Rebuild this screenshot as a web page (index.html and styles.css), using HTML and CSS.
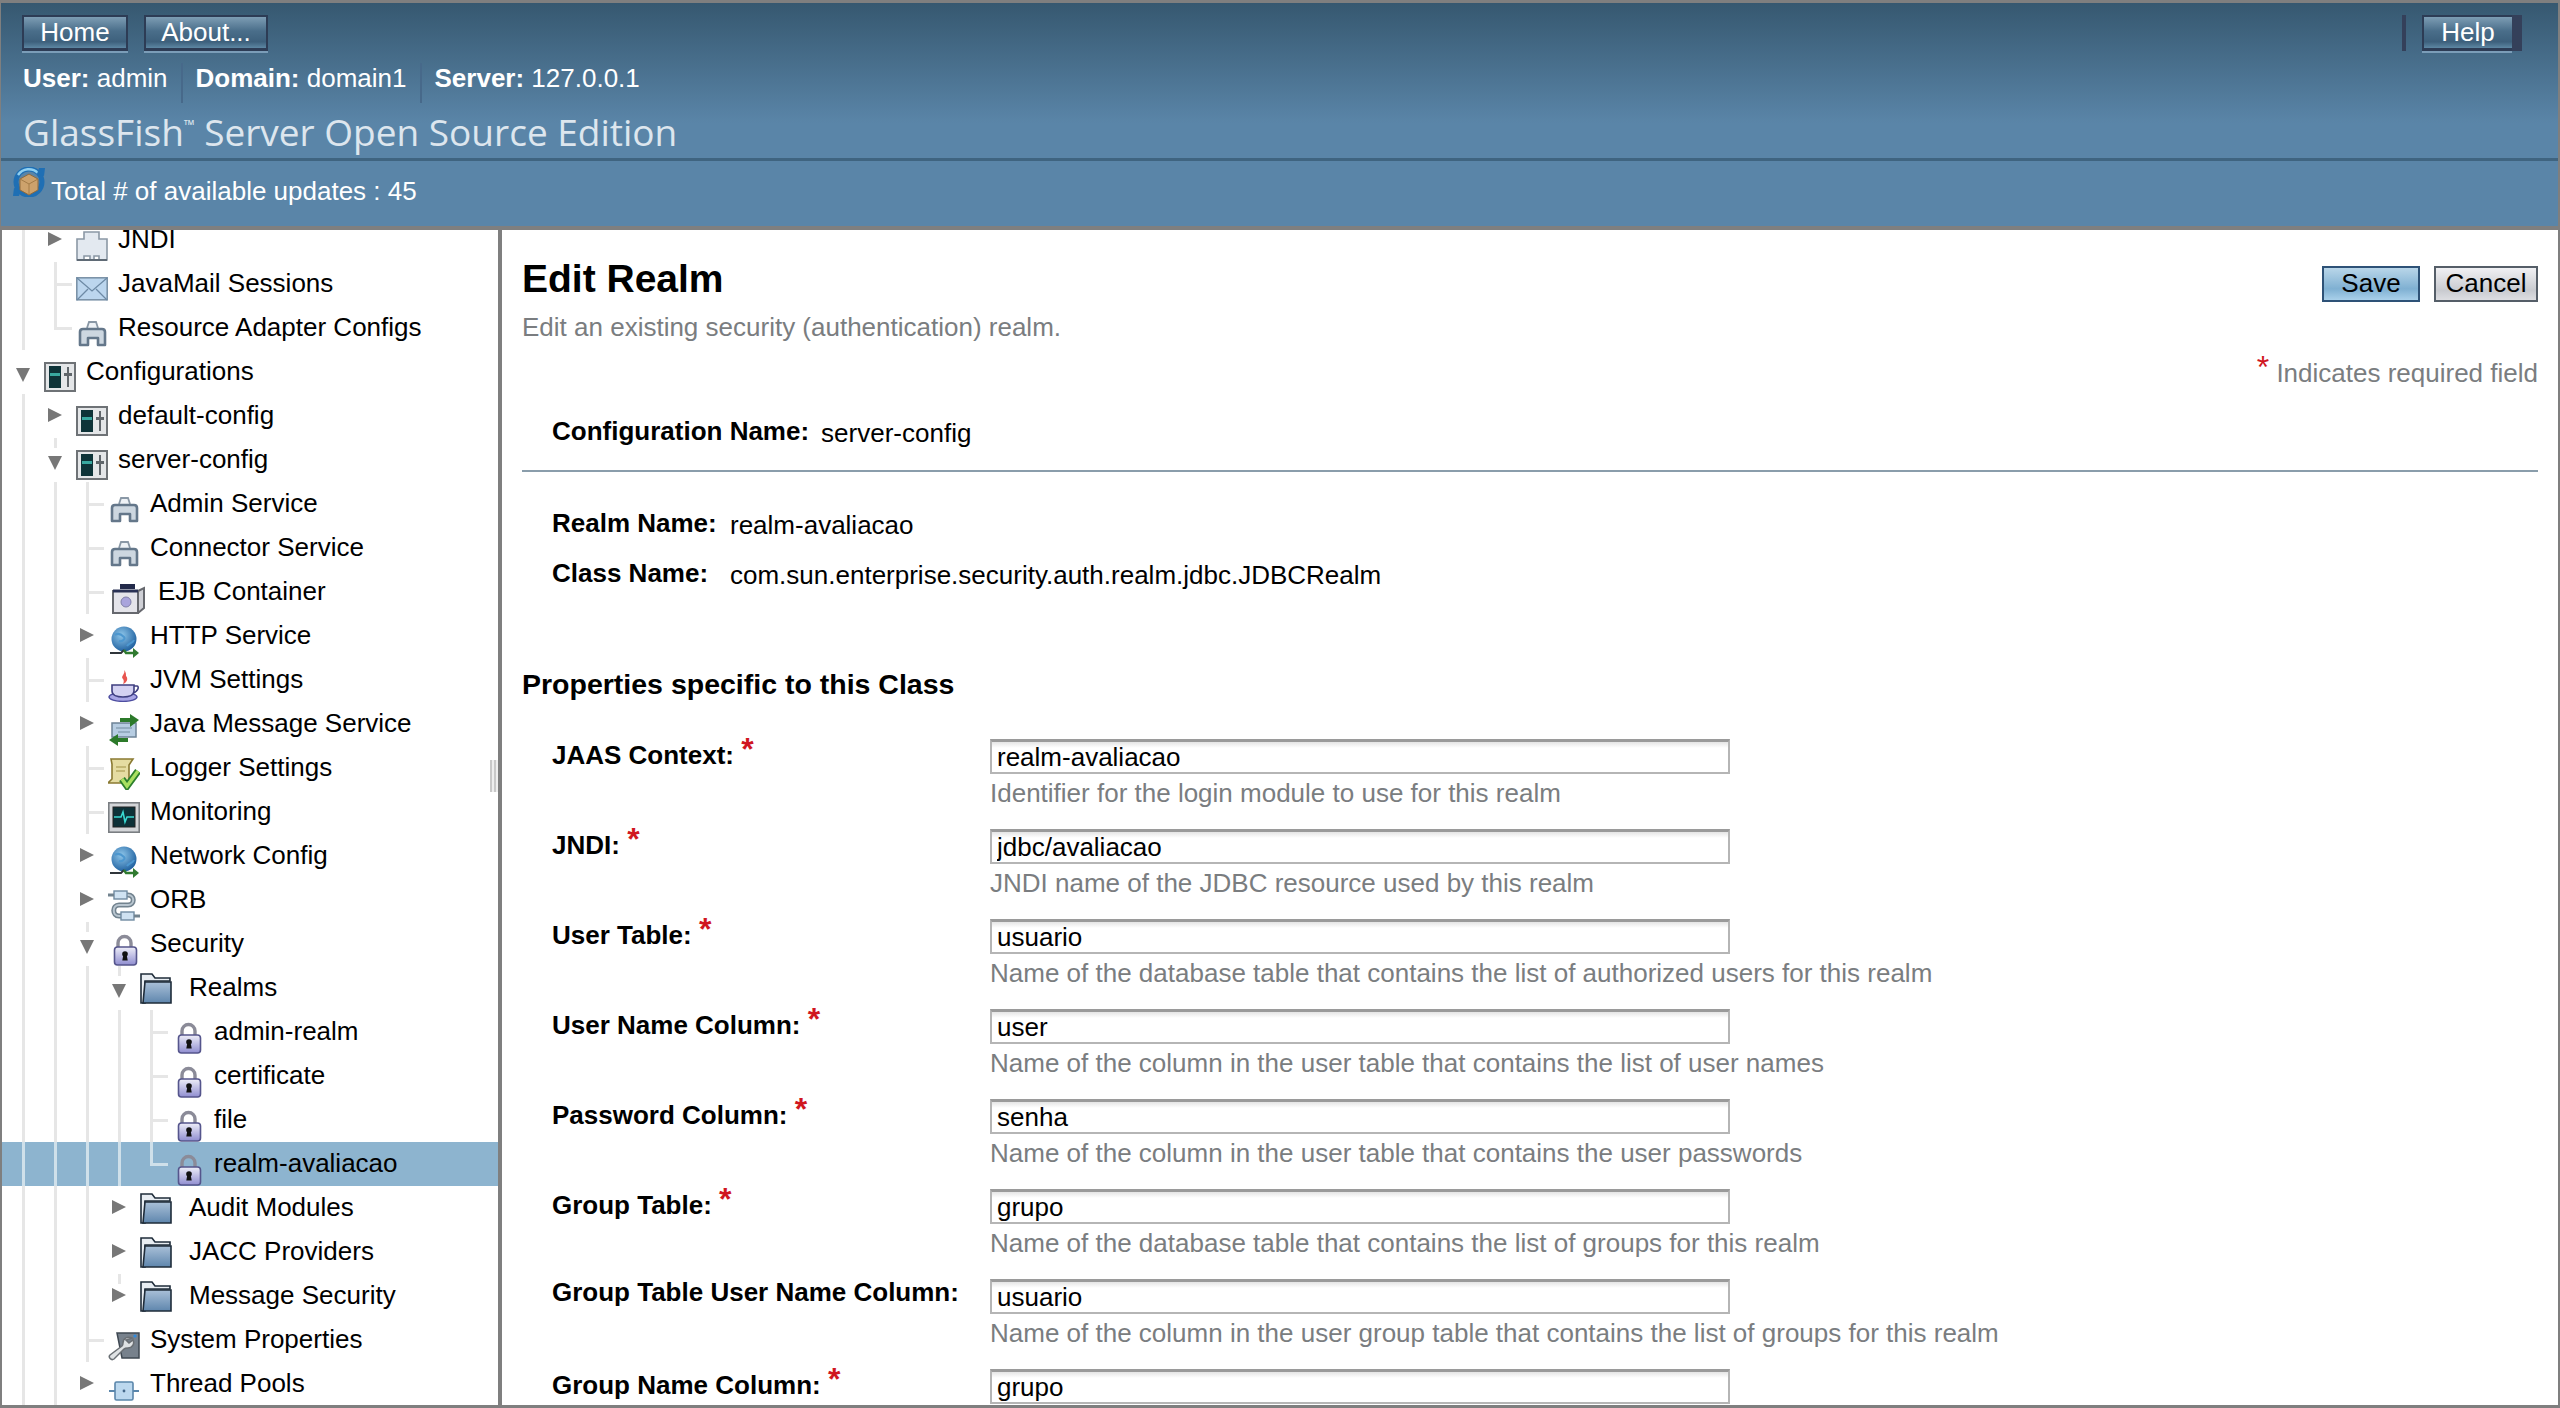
FILE: index.html
```html
<!DOCTYPE html>
<html>
	<head>
		<title>Edit Realm</title>
		<link rel="stylesheet" href="styles.css">
	</head>
	<body>
		<svg class="defs" width="0" height="0">
			<defs>
				<linearGradient id="gLock" x1="0" y1="0" x2="0" y2="1"><stop offset="0" stop-color="#eeeef8"/><stop offset="1" stop-color="#8f8dd0"/></linearGradient>
				<linearGradient id="gFolder" x1="0" y1="0" x2="0" y2="1"><stop offset="0" stop-color="#a9c0d8"/><stop offset="1" stop-color="#5f86ad"/></linearGradient>
				<radialGradient id="gGlobe" cx="0.4" cy="0.35" r="0.7"><stop offset="0" stop-color="#8ec6ea"/><stop offset="1" stop-color="#1a5c9c"/></radialGradient>
				<symbol id="i-lock" viewBox="0 0 32 32">
					<path d="M10 15V9a6.5 6.5 0 0 1 13 0v6" fill="none" stroke="#8b8b98" stroke-width="3.4"/>
					<rect x="6.5" y="13" width="22" height="18" rx="3" fill="url(#gLock)" stroke="#55558c" stroke-width="1.6"/>
					<circle cx="17" cy="20" r="2.8" fill="#111"/>
					<path d="M15.5 20h3l1.2 6.5h-5.4z" fill="#111"/>
				</symbol>
				<symbol id="i-folder" viewBox="0 0 32 32">
					<path d="M1 31V2h11l3 4h15v3H5v22z" fill="#e8edf2" stroke="#1f2c3a" stroke-width="1.6"/>
					<path d="M5 10h26v21H3z" fill="url(#gFolder)" stroke="#1f2c3a" stroke-width="1.6"/>
				</symbol>
				<symbol id="i-adapter" viewBox="0 0 32 32">
					<path d="M11 10l2-6h7l2 6" fill="#eef2f6" stroke="#8a98a6" stroke-width="1.8"/>
					<path d="M4 27V14c0-2 1-3 3-3h19c2 0 3 1 3 3v13h-7v-7H12v7z" fill="#cdd7e0" stroke="#64778a" stroke-width="2.6" stroke-linejoin="round"/>
				</symbol>
				<symbol id="i-jndi" viewBox="0 0 32 32">
					<path d="M1 30V9h7V2h15v7h8v21h-8v-4h-5v4h-4v-4H8v4z" fill="#e3e9f0" stroke="#8b98a5" stroke-width="1.6"/>
					<path d="M1 30h30" stroke="#5f6a75" stroke-width="2"/>
				</symbol>
				<symbol id="i-mail" viewBox="0 0 32 32">
					<rect x="0.8" y="3.8" width="30.4" height="22" fill="#bcd6ee" stroke="#7c93a8" stroke-width="1.6"/>
					<path d="M1 4l15 13L31 4M1 26l11-11M31 26L20 15" fill="none" stroke="#6d8aa5" stroke-width="1.3"/>
				</symbol>
				<symbol id="i-config" viewBox="0 0 32 32">
					<rect x="1" y="1" width="30" height="28" fill="#e4e6e8" stroke="#6e7276" stroke-width="2"/>
					<rect x="5" y="4" width="12" height="22" fill="#0e3338"/>
					<rect x="6" y="11" width="10" height="3" fill="#39a8a0"/>
					<path d="M24 5v20" stroke="#60666b" stroke-width="2"/>
					<rect x="20" y="11" width="8" height="3" fill="#60666b"/>
				</symbol>
				<symbol id="i-ejb" viewBox="0 0 36 32">
					<path d="M10 7V3h13v4" fill="#232a4a" stroke="#232a4a" stroke-width="2"/>
					<rect x="2" y="9" width="25" height="22" fill="#e4e4ea" stroke="#66686e" stroke-width="2"/>
					<path d="M27 9l6-3v20l-6 5z" fill="#cfd0d6" stroke="#66686e" stroke-width="2"/>
					<path d="M2 9h25" stroke="#2a3255" stroke-width="3"/>
					<circle cx="15" cy="20" r="5" fill="#a9a4dc" stroke="#7f7fa8"/>
				</symbol>
				<symbol id="i-globe" viewBox="0 0 32 32">
					<circle cx="16" cy="13" r="12.5" fill="url(#gGlobe)"/>
					<path d="M7 9c4-3 7 0 9 2s-2 5-5 4M19 20c2-3 6-3 7-6" fill="none" stroke="#4d97cf" stroke-width="2"/>
					<path d="M2 27h11l3-3" fill="none" stroke="#30353a" stroke-width="2"/>
					<path d="M16 24l2 3h8" fill="none" stroke="#2f7a2f" stroke-width="2.4"/>
					<path d="M25 22l6 5-6 5z" fill="#2f7a2f"/>
				</symbol>
				<symbol id="i-java" viewBox="0 0 32 32">
					<path d="M16 0c2 4-4 6-1 9 1 1 1 3 0 5 5-2 5-6 3-8 0-2 0-4-2-6z" fill="#e8554f"/>
					<ellipse cx="15" cy="27" rx="14" ry="4.4" fill="#a9a6e6" stroke="#4d4da0" stroke-width="1.4"/>
					<path d="M4 15h22v6c0 4-5 6-11 6S4 25 4 21z" fill="#d4d2f2" stroke="#3f3f80" stroke-width="1.6"/>
					<path d="M26 16h3c2 0 2 5-4 7" fill="none" stroke="#3f3f80" stroke-width="1.6"/>
				</symbol>
				<symbol id="i-jms" viewBox="0 0 32 32">
					<rect x="4" y="9" width="24" height="14" fill="#b7cde2" stroke="#6e8397" stroke-width="1.5"/>
					<path d="M8 14h16M10 18h12" stroke="#8ba2b6" stroke-width="1.4"/>
					<path d="M12 6h12" stroke="#2c7a2a" stroke-width="4"/>
					<path d="M22 0l9 6-9 7z" fill="#2c7a2a"/>
					<path d="M20 26H8" stroke="#2c7a2a" stroke-width="4"/>
					<path d="M10 20l-9 6 9 6z" fill="#2c7a2a"/>
				</symbol>
				<symbol id="i-log" viewBox="0 0 32 32">
					<path d="M3 1h22l-4 6v14l2 4H0l4-4V6z" fill="#e5dca2" stroke="#8a7a32" stroke-width="1.6"/>
					<path d="M8 9h10M8 13h9" stroke="#b8ab66" stroke-width="1.6"/>
					<path d="M14 21l5 7L30 13" fill="none" stroke="#2c7f2c" stroke-width="7"/>
					<path d="M14 21l5 7L30 13" fill="none" stroke="#a8e060" stroke-width="3.4"/>
				</symbol>
				<symbol id="i-mon" viewBox="0 0 32 32">
					<rect x="0.8" y="0.8" width="30.4" height="29.4" fill="#d3d5d8" stroke="#7a7e82" stroke-width="1.6"/>
					<rect x="5" y="5" width="22" height="20" fill="#0d3138" stroke="#222"/>
					<path d="M6 15h7l2-5 2 10 2-5h7" fill="none" stroke="#39d8d0" stroke-width="1.6"/>
				</symbol>
				<symbol id="i-orb" viewBox="0 0 32 32">
					<path d="M8 5h12c7 0 7 10 0 10H11c-7 0-7 11 0 11h8" fill="none" stroke="#72838f" stroke-width="5"/>
					<path d="M8 5h12c7 0 7 10 0 10H11c-7 0-7 11 0 11h8" fill="none" stroke="#b9c6d0" stroke-width="2"/>
					<rect x="6" y="1" width="13" height="8" fill="#cfe2f2" stroke="#6f8ba2" stroke-width="1.4"/>
					<rect x="13" y="22" width="13" height="8" fill="#cfe2f2" stroke="#6f8ba2" stroke-width="1.4"/>
					<path d="M0 5h6M26 26h6" stroke="#72838f" stroke-width="3"/>
				</symbol>
				<symbol id="i-wrench" viewBox="0 0 32 32">
					<path d="M9 3h22v25H14z" fill="#77818c" stroke="#3f4852" stroke-width="1.5"/>
					<circle cx="27" cy="6" r="1.6" fill="#2d8ae0"/>
					<path d="M24 8c-4-2-9 0-9 5 0 2 0 2-1 3L2 25c-2 2 1 6 4 4l10-10c1-1 2-1 4-1 4 0 7-4 5-8l-4 3-3-3z" fill="#dfe2e4" stroke="#6a6f74" stroke-width="1.5"/>
				</symbol>
				<symbol id="i-thread" viewBox="0 0 32 32">
					<rect x="7" y="8" width="18" height="18" rx="1.5" fill="#bcd8ee" stroke="#5a86ab" stroke-width="1.6"/>
					<circle cx="16" cy="17" r="1.4" fill="#45688a"/>
					<path d="M1 17h6M25 17h6" stroke="#5a86ab" stroke-width="2"/>
				</symbol>
				<symbol id="i-update" viewBox="0 0 34 30">
					<circle cx="17" cy="15" r="13" fill="none" stroke="#1f6fb4" stroke-width="5"/>
					<path d="M6 8a13 13 0 0 1 20-2" fill="none" stroke="#8fd0f2" stroke-width="2.4"/>
					<path d="M27 1l6 0-1 8-7-2z" fill="#1f6fb4"/>
					<path d="M7 29l-6 0 1-8 7 2z" fill="#1f6fb4"/>
					<path d="M8 12l9-5 9 5v11l-9 5-9-5z" fill="#cda26c" stroke="#8f6a3c"/>
					<path d="M8 12l9 5 9-5M17 17v11" fill="none" stroke="#a47c48"/>
				</symbol>
			</defs>
		</svg>
		<div class="frame">
			<div class="masthead">
				<div class="nav-row">
					<div class="nav-left">
						<button class="nav-btn btn-home">Home</button>
						<button class="nav-btn btn-about">About...</button>
					</div>
					<div class="nav-right">
						<span class="nav-sep"></span>
						<span class="help-wrap"><button class="nav-btn btn-help">Help</button></span>
					</div>
				</div>
				<div class="info-row">
					<span class="info"><b>User:</b> admin</span>
					<span class="info"><b>Domain:</b> domain1</span>
					<span class="info"><b>Server:</b> 127.0.0.1</span>
				</div>
				<div class="product">GlassFish<sup>™</sup> Server Open Source Edition</div>
				<div class="status-bar">
					<svg class="status-icon"><use href="#i-update"/></svg>
					<span>Total # of available updates : 45</span>
				</div>
			</div>
			<div class="panels">
				<div class="tree">
					<div class="tree-scroll">
						<div class="row"><i class="c v"></i><i class="c ar"></i><svg class="ic"><use href="#i-jndi"/></svg><span class="tx">JNDI</span></div>
						<div class="row"><i class="c v"></i><i class="c t"></i><svg class="ic"><use href="#i-mail"/></svg><span class="tx">JavaMail Sessions</span></div>
						<div class="row"><i class="c v"></i><i class="c l"></i><svg class="ic"><use href="#i-adapter"/></svg><span class="tx">Resource Adapter Configs</span></div>
						<div class="row"><i class="c ad"></i><svg class="ic"><use href="#i-config"/></svg><span class="tx">Configurations</span></div>
						<div class="row"><i class="c v"></i><i class="c ar"></i><svg class="ic"><use href="#i-config"/></svg><span class="tx">default-config</span></div>
						<div class="row"><i class="c v"></i><i class="c ad stub"></i><svg class="ic"><use href="#i-config"/></svg><span class="tx">server-config</span></div>
						<div class="row"><i class="c v"></i><i class="c v"></i><i class="c t"></i><svg class="ic"><use href="#i-adapter"/></svg><span class="tx">Admin Service</span></div>
						<div class="row"><i class="c v"></i><i class="c v"></i><i class="c t"></i><svg class="ic"><use href="#i-adapter"/></svg><span class="tx">Connector Service</span></div>
						<div class="row"><i class="c v"></i><i class="c v"></i><i class="c t"></i><svg class="ic ic-ejb"><use href="#i-ejb"/></svg><span class="tx">EJB Container</span></div>
						<div class="row"><i class="c v"></i><i class="c v"></i><i class="c ar"></i><svg class="ic"><use href="#i-globe"/></svg><span class="tx">HTTP Service</span></div>
						<div class="row"><i class="c v"></i><i class="c v"></i><i class="c t"></i><svg class="ic"><use href="#i-java"/></svg><span class="tx">JVM Settings</span></div>
						<div class="row"><i class="c v"></i><i class="c v"></i><i class="c ar"></i><svg class="ic"><use href="#i-jms"/></svg><span class="tx">Java Message Service</span></div>
						<div class="row"><i class="c v"></i><i class="c v"></i><i class="c t"></i><svg class="ic"><use href="#i-log"/></svg><span class="tx">Logger Settings</span></div>
						<div class="row"><i class="c v"></i><i class="c v"></i><i class="c t"></i><svg class="ic"><use href="#i-mon"/></svg><span class="tx">Monitoring</span></div>
						<div class="row"><i class="c v"></i><i class="c v"></i><i class="c ar"></i><svg class="ic"><use href="#i-globe"/></svg><span class="tx">Network Config</span></div>
						<div class="row"><i class="c v"></i><i class="c v"></i><i class="c ar"></i><svg class="ic"><use href="#i-orb"/></svg><span class="tx">ORB</span></div>
						<div class="row"><i class="c v"></i><i class="c v"></i><i class="c ad stub"></i><svg class="ic"><use href="#i-lock"/></svg><span class="tx">Security</span></div>
						<div class="row"><i class="c v"></i><i class="c v"></i><i class="c v"></i><i class="c ad stub"></i><svg class="ic ic-folder"><use href="#i-folder"/></svg><span class="tx">Realms</span></div>
						<div class="row"><i class="c v"></i><i class="c v"></i><i class="c v"></i><i class="c v"></i><i class="c t"></i><svg class="ic"><use href="#i-lock"/></svg><span class="tx">admin-realm</span></div>
						<div class="row"><i class="c v"></i><i class="c v"></i><i class="c v"></i><i class="c v"></i><i class="c t"></i><svg class="ic"><use href="#i-lock"/></svg><span class="tx">certificate</span></div>
						<div class="row"><i class="c v"></i><i class="c v"></i><i class="c v"></i><i class="c v"></i><i class="c t"></i><svg class="ic"><use href="#i-lock"/></svg><span class="tx">file</span></div>
						<div class="row selected"><i class="c v"></i><i class="c v"></i><i class="c v"></i><i class="c v"></i><i class="c l"></i><svg class="ic"><use href="#i-lock"/></svg><span class="tx">realm-avaliacao</span></div>
						<div class="row"><i class="c v"></i><i class="c v"></i><i class="c v"></i><i class="c ar"></i><svg class="ic ic-folder"><use href="#i-folder"/></svg><span class="tx">Audit Modules</span></div>
						<div class="row"><i class="c v"></i><i class="c v"></i><i class="c v"></i><i class="c ar"></i><svg class="ic ic-folder"><use href="#i-folder"/></svg><span class="tx">JACC Providers</span></div>
						<div class="row"><i class="c v"></i><i class="c v"></i><i class="c v"></i><i class="c ar stub"></i><svg class="ic ic-folder"><use href="#i-folder"/></svg><span class="tx">Message Security</span></div>
						<div class="row"><i class="c v"></i><i class="c v"></i><i class="c t"></i><svg class="ic"><use href="#i-wrench"/></svg><span class="tx">System Properties</span></div>
						<div class="row"><i class="c v"></i><i class="c v"></i><i class="c ar"></i><svg class="ic"><use href="#i-thread"/></svg><span class="tx">Thread Pools</span></div>
					</div>
					<div class="grip"></div>
				</div>
				<div class="content">
					<div class="title-bar">
						<h1>Edit Realm</h1>
						<div class="actions">
							<button class="act act-primary">Save</button>
							<button class="act">Cancel</button>
						</div>
					</div>
					<p class="subtitle">Edit an existing security (authentication) realm.</p>
					<p class="legend"><span class="req">*</span> Indicates required field</p>
					<div class="kv kv-config"><label>Configuration Name:</label><span>server-config</span></div>
					<div class="rule"></div>
					<div class="kv kv-realm"><label>Realm Name:</label><span>realm-avaliacao</span></div>
					<div class="kv kv-class"><label>Class Name:</label><span>com.sun.enterprise.security.auth.realm.jdbc.JDBCRealm</span></div>
					<h2>Properties specific to this Class</h2>
					<div class="prop">
						<label>JAAS Context: <span class="req">*</span></label>
						<div><input class="field" value="realm-avaliacao"><div class="help">Identifier for the login module to use for this realm</div></div>
					</div>
					<div class="prop">
						<label>JNDI: <span class="req">*</span></label>
						<div><input class="field" value="jdbc/avaliacao"><div class="help">JNDI name of the JDBC resource used by this realm</div></div>
					</div>
					<div class="prop">
						<label>User Table: <span class="req">*</span></label>
						<div><input class="field" value="usuario"><div class="help">Name of the database table that contains the list of authorized users for this realm</div></div>
					</div>
					<div class="prop">
						<label>User Name Column: <span class="req">*</span></label>
						<div><input class="field" value="user"><div class="help">Name of the column in the user table that contains the list of user names</div></div>
					</div>
					<div class="prop">
						<label>Password Column: <span class="req">*</span></label>
						<div><input class="field" value="senha"><div class="help">Name of the column in the user table that contains the user passwords</div></div>
					</div>
					<div class="prop">
						<label>Group Table: <span class="req">*</span></label>
						<div><input class="field" value="grupo"><div class="help">Name of the database table that contains the list of groups for this realm</div></div>
					</div>
					<div class="prop prop-optional">
						<label>Group Table User Name Column:</label>
						<div><input class="field" value="usuario"><div class="help">Name of the column in the user group table that contains the list of groups for this realm</div></div>
					</div>
					<div class="prop">
						<label>Group Name Column: <span class="req">*</span></label>
						<div><input class="field" value="grupo"></div>
					</div>
				</div>
			</div>
		</div>
	</body>
</html>
```

FILE: styles.css
```css
html, body {
	margin: 0;
	height: 1408px;
	overflow: hidden;
	background: #fff;
	font-family: "Liberation Sans", Arial, sans-serif;
}
.defs {
	position: absolute;
}
.frame {
	height: 1408px;
	box-sizing: border-box;
	border: solid #7f7f7f;
	border-width: 3px 2px 3px 2px;
	display: flex;
	flex-direction: column;
}

/* masthead */
.masthead {
	height: 227px;
	flex: none;
	box-sizing: border-box;
	margin-left: -1px;
	border-bottom: 4px solid #7f7f7f;
	background: linear-gradient(#365870, #5a85a8 120px);
	color: #fff;
}
.nav-row {
	display: flex;
	justify-content: space-between;
	padding: 12px 36px 0 21px;
	height: 36px;
}
.nav-left {
	display: flex;
	gap: 16px;
}
.nav-right {
	display: flex;
}
.nav-btn {
	height: 36px;
	box-sizing: border-box;
	padding: 0;
	border: 0;
	border-top: 2px solid #2d3c55;
	border-left: 2px solid #2d3c55;
	border-right: 2px solid #2d3c55;
	border-bottom: 3px solid #2d3c55;
	box-shadow: 0 2px 0 #7b9db8;
	background: linear-gradient(#7d9db4, #4a6e8a 45%, #3d607c 80%, #5d87a3);
	color: #fff;
	font: 26px "Liberation Sans", Arial, sans-serif;
}
.btn-home {
	width: 106px;
}
.btn-about {
	width: 124px;
}
.nav-sep {
	width: 4px;
	height: 36px;
	background: #34405a;
	margin-right: 16px;
}
.help-wrap {
	display: block;
	width: 100px;
	height: 36px;
	background: #34405a;
}
.btn-help {
	width: 90px;
	border-right: 0;
}
.info-row {
	display: flex;
	padding: 12px 0 0 22px;
	height: 40px;
	font-size: 26px;
	line-height: 30px;
}
.info {
	padding-right: 13px;
	margin-right: 13px;
	border-right: 2px solid #47698a;
}
.info:last-child {
	border: 0;
}
.product {
	padding: 4px 0 0 22px;
	box-sizing: border-box;
	font: 37px/50px "Open Sans", sans-serif;
	color: #dde6ee;
	border-bottom: 3px solid #3f6480;
	height: 58px;
}
.product sup {
	font-size: 14px;
	vertical-align: 16px;
	line-height: 0;
}
.status-bar {
	display: flex;
	align-items: flex-start;
	padding: 6px 0 0 11px;
	font-size: 26px;
	line-height: 48px;
}
.status-icon {
	width: 34px;
	height: 30px;
	margin-right: 5px;
}

/* tree */
.panels {
	flex: 1;
	display: flex;
	min-height: 0;
}
.tree {
	width: 496px;
	flex: none;
	position: relative;
	border-right: 4px solid #7f7f7f;
	overflow: hidden;
}
.tree-scroll {
	margin-top: -12px;
}
.row {
	display: flex;
	height: 44px;
	padding-left: 5px;
	font-size: 26px;
	line-height: 42px;
	color: #000;
}
.row.selected {
	background: #8db4cf;
}
.c {
	display: block;
	width: 32px;
	flex: none;
	position: relative;
}
.c.v::before, .c.t::before, .c.l::before, .c.stub::before {
	content: "";
	position: absolute;
	left: 15px;
	top: 0;
	bottom: 0;
	width: 3px;
	background: #e6e6e6;
}
.c.l::before {
	bottom: 20px;
}
.c.stub::before {
	bottom: 34px;
}
.c.t::after, .c.l::after {
	content: "";
	position: absolute;
	left: 15px;
	top: 21px;
	width: 18px;
	height: 3px;
	background: #e6e6e6;
}
.selected .c::before, .selected .c::after {
	background: #cfe0ea;
}
.c.ar::after, .c.ad::after {
	content: "";
	display: block;
	width: 14px;
	height: 14px;
	background: #777;
}
.c.ar::after {
	margin: 14px 0 0 9px;
	clip-path: polygon(0 0, 100% 50%, 0 100%);
}
.c.ad::after {
	margin: 18px 0 0 9px;
	clip-path: polygon(0 0, 100% 0, 50% 100%);
}
.ic {
	flex: none;
	width: 32px;
	height: 32px;
	margin: 12px 10px 0 5px;
	overflow: visible;
}
.ic-folder {
	margin-top: 6px;
	margin-right: 17px;
}
.ic-ejb {
	width: 36px;
	margin-right: 11px;
	margin-left: 8px;
}
.tx {
	white-space: nowrap;
}
.grip {
	position: absolute;
	right: 0;
	top: 530px;
	width: 8px;
	height: 32px;
	background: repeating-linear-gradient(90deg, #c8c8c8 0 2px, #eee 2px 4px);
}

/* content */
.content {
	flex: 1;
	min-width: 0;
	padding: 0 20px;
	overflow: hidden;
	font-size: 26px;
}
.title-bar {
	display: flex;
	justify-content: space-between;
	height: 81px;
}
h1 {
	margin: 27px 0 0;
	font-size: 39px;
	line-height: 44px;
}
.actions {
	display: flex;
	gap: 14px;
	padding-top: 36px;
}
.act {
	height: 36px;
	box-sizing: border-box;
	width: 104px;
	padding: 0 0 2px;
	border: 2px solid #555e68;
	background: linear-gradient(#f0f0f3, #c9cbd0 70%, #dddee2);
	font: 26px "Liberation Sans", Arial, sans-serif;
	color: #000;
}
.act-primary {
	width: 98px;
	border-color: #2e5277;
	background: linear-gradient(#b9d6e9, #7fb0d2 65%, #a9d0ea);
}
.subtitle {
	margin: 0;
	line-height: 32px;
	color: #7a7d80;
}
.legend {
	margin: 14px 0 0;
	line-height: 32px;
	text-align: right;
	color: #7a7d80;
}
.req {
	color: #d0161f;
	font-size: 32px;
	line-height: 0;
	vertical-align: 4px;
}
.kv {
	display: flex;
	padding-left: 30px;
	line-height: 32px;
}
.kv label {
	font-weight: bold;
	flex: none;
	margin-top: -2px;
}
.kv-config {
	margin-top: 28px;
}
.kv-config label {
	margin-right: 12px;
}
.rule {
	height: 2px;
	background: #8a9dab;
	margin-top: 21px;
}
.kv-realm {
	margin-top: 37px;
}
.kv-class {
	margin-top: 18px;
}
.kv-realm label, .kv-class label {
	width: 178px;
}
h2 {
	margin: 76px 0 0;
	font-size: 28.5px;
	line-height: 34px;
}
.prop {
	display: grid;
	grid-template-columns: 438px 1fr;
	height: 90px;
	padding-left: 30px;
}
h2 + .prop {
	margin-top: 38px;
}
.prop label {
	font-weight: bold;
	line-height: 32px;
}
.prop-optional label {
	margin-top: -3px;
}
.field {
	display: block;
	width: 740px;
	height: 35px;
	box-sizing: border-box;
	padding: 0 5px;
	margin: 0;
	border: solid #b5b5b5;
	border-width: 3px 2px 2px;
	border-top-color: #9a9a9a;
	outline: 0;
	background: linear-gradient(#e4e4e4, #fff 6px);
	font: 26px "Liberation Sans", Arial, sans-serif;
	color: #000;
}
.help {
	line-height: 32px;
	margin-top: 3px;
	color: #7a7d80;
	white-space: nowrap;
}
```
